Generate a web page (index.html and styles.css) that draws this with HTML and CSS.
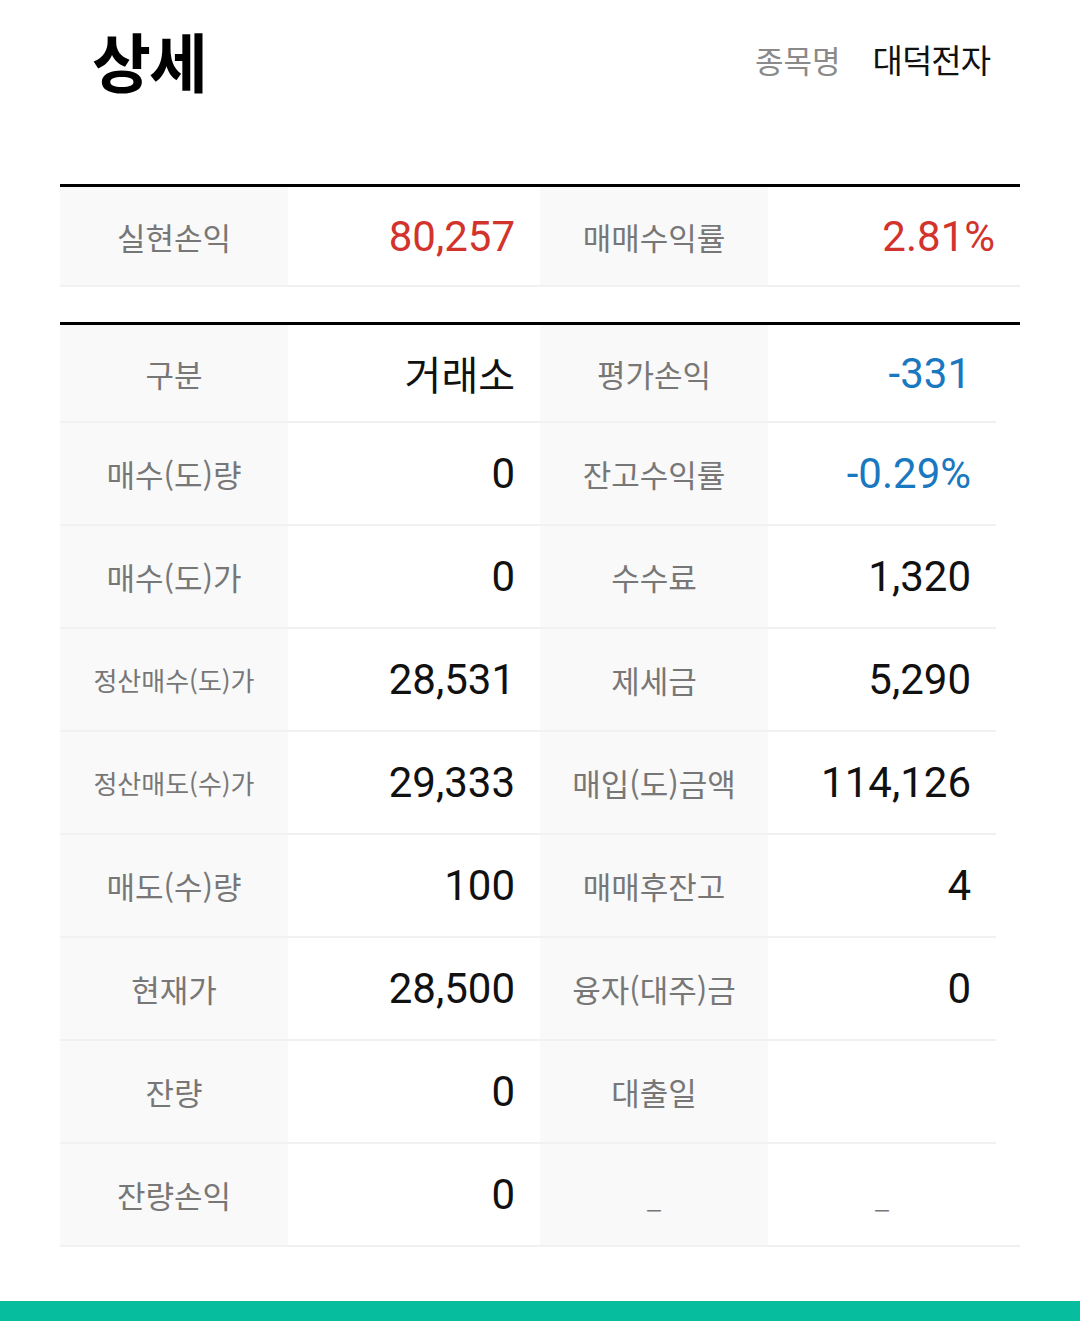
FILE: index.html
```html
<!DOCTYPE html>
<html lang="ko">
<head>
<meta charset="utf-8">
<title>상세</title>
<link rel="stylesheet" href="styles.css">
</head>
<body>
<div class="page">
  <header class="head">
    <h1 class="title">상세</h1>
    <div class="stock">
      <span class="stock-label">종목명</span>
      <span class="stock-name">대덕전자</span>
    </div>
  </header>

  <section class="table table-summary">
    <div class="row">
      <div class="label">실현손익</div>
      <div class="value up">80,257</div>
      <div class="label">매매수익률</div>
      <div class="value up">2.81%</div>
    </div>
  </section>

  <section class="table table-detail">
    <div class="row">
      <div class="label">구분</div>
      <div class="value ko">거래소</div>
      <div class="label">평가손익</div>
      <div class="value down">-331</div>
    </div>
    <div class="row">
      <div class="label">매수(도)량</div>
      <div class="value">0</div>
      <div class="label">잔고수익률</div>
      <div class="value down">-0.29%</div>
    </div>
    <div class="row">
      <div class="label">매수(도)가</div>
      <div class="value">0</div>
      <div class="label">수수료</div>
      <div class="value">1,320</div>
    </div>
    <div class="row">
      <div class="label small">정산매수(도)가</div>
      <div class="value">28,531</div>
      <div class="label">제세금</div>
      <div class="value">5,290</div>
    </div>
    <div class="row">
      <div class="label small">정산매도(수)가</div>
      <div class="value">29,333</div>
      <div class="label">매입(도)금액</div>
      <div class="value">114,126</div>
    </div>
    <div class="row">
      <div class="label">매도(수)량</div>
      <div class="value">100</div>
      <div class="label">매매후잔고</div>
      <div class="value">4</div>
    </div>
    <div class="row">
      <div class="label">현재가</div>
      <div class="value">28,500</div>
      <div class="label">융자(대주)금</div>
      <div class="value">0</div>
    </div>
    <div class="row">
      <div class="label">잔량</div>
      <div class="value">0</div>
      <div class="label">대출일</div>
      <div class="value"></div>
    </div>
    <div class="row">
      <div class="label">잔량손익</div>
      <div class="value">0</div>
      <div class="label dash">_</div>
      <div class="value dash center">_</div>
    </div>
  </section>
</div>
<div class="bottom-bar"></div>
</body>
</html>
```

FILE: styles.css
```css
html, body {
  margin: 0;
  padding: 0;
  background: #ffffff;
}

body {
  width: 1080px;
  height: 1321px;
  display: flex;
  flex-direction: column;
  font-family: "Noto Sans CJK KR", "Noto Sans", sans-serif;
  color: #111111;
}

.page {
  flex: 1;
  padding: 0 60px;
}

.head {
  height: 118px;
  display: flex;
  align-items: center;
  justify-content: space-between;
  padding: 0 30px 0 32px;
}

.title {
  margin: 0;
  font-size: 64px;
  font-weight: 700;
  line-height: 1;
  color: #000;
  letter-spacing: -2px;
}

.stock {
  display: flex;
  align-items: center;
  gap: 32px;
}

.stock-label {
  font-size: 31px;
  color: #8a8a8a;
}

.stock-name {
  font-size: 33px;
  color: #111;
  letter-spacing: -1px;
}

.table {
  border-top: 3px solid #000;
}

.table-summary {
  margin-top: 66px;
}

.table-summary .row {
  grid-template-columns: 228px 252px 228px 252px;
  height: 98px;
  border-bottom: 2px solid #f1f1f1;
}

.table-detail {
  margin-top: 35px;
  border-bottom: 2px solid #f1f1f1;
}

.row {
  display: grid;
  grid-template-columns: 228px 252px 228px 228px;
  height: 101px;
}

.table-detail .row {
  width: 936px;
  border-bottom: 2px solid #f1f1f1;
}

.table-detail .row:first-child {
  height: 96px;
}

.table-detail .row:last-child {
  border-bottom: none;
}

.label {
  background: #f9f9f9;
  display: flex;
  align-items: center;
  justify-content: center;
  font-size: 31px;
  color: #777777;
}

.label.small {
  font-size: 26px;
}

.value {
  display: flex;
  align-items: center;
  justify-content: flex-end;
  padding-right: 25px;
  font-family: Roboto, "Noto Sans CJK KR", sans-serif;
  font-size: 42px;
  color: #111111;
}

.value.ko {
  font-family: "Noto Sans CJK KR", sans-serif;
  font-size: 40px;
}

.value.up {
  color: #d2332c;
}

.value.down {
  color: #1a78c0;
}

.dash {
  font-family: "Noto Sans CJK KR", sans-serif;
  font-size: 26px;
  color: #777777;
  padding-top: 4px;
}

.value.center {
  justify-content: center;
  padding-right: 0;
}

.bottom-bar {
  height: 20px;
  background: #06be9e;
}
```
